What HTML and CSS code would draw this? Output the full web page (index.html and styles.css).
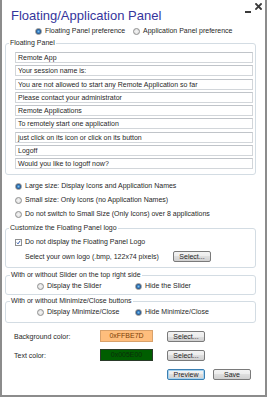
FILE: index.html
```html
<!DOCTYPE html>
<html lang="en">
<head>
    <meta charset="UTF-8">
    <title>Floating/Application Panel</title>
    <link rel="stylesheet" href="styles.css">
</head>
<body>
    <div class="window">
        <div class="header">
            <h1 class="title">Floating/Application Panel</h1>
            <div class="controls">
                <span class="minimize"></span>
                <svg class="close" width="7" height="7" viewBox="0 0 7 7">
                    <path d="M1 1 L6 6 M6 1 L1 6" stroke="#3a3a3a" stroke-width="1.8" stroke-linecap="square"/>
                </svg>
            </div>
        </div>

        <div class="pref-row">
            <label class="option"><span class="radio checked"></span>Floating Panel preference</label>
            <label class="option"><span class="radio"></span>Application Panel preference</label>
        </div>

        <fieldset class="group texts">
            <legend>Floating Panel</legend>
            <div class="field">Remote App</div>
            <div class="field">Your session name is:</div>
            <div class="field">You are not allowed to start any Remote Application so far</div>
            <div class="field">Please contact your administrator</div>
            <div class="field">Remote Applications</div>
            <div class="field">To remotely start one application</div>
            <div class="field">just click on its icon or click on its button</div>
            <div class="field">Logoff</div>
            <div class="field">Would you like to logoff now?</div>
        </fieldset>

        <div class="sizes">
            <label class="option"><span class="radio checked"></span>Large size: Display Icons and Application Names</label>
            <label class="option"><span class="radio"></span>Small size: Only Icons (no Application Names)</label>
            <label class="option"><span class="radio"></span>Do not switch to Small Size (Only Icons) over 8 applications</label>
        </div>

        <fieldset class="group logo">
            <legend>Customize the Floating Panel logo</legend>
            <label class="option">
                <span class="checkbox">
                    <svg width="7" height="7" viewBox="0 0 7 7"><path d="M1.2 3.6 L2.8 5.4 L5.8 1.2" fill="none" stroke="#2752a8" stroke-width="1.3"/></svg>
                </span>Do not display the Floating Panel Logo
            </label>
            <div class="logo-row">
                <span class="logo-text">Select your own logo (.bmp, 122x74 pixels)</span>
                <button class="btn">Select...</button>
            </div>
        </fieldset>

        <fieldset class="group pair slider">
            <legend>With or without Slider on the top right side</legend>
            <div class="pair-row">
                <label class="option"><span class="radio"></span>Display the Slider</label>
                <label class="option"><span class="radio checked"></span>Hide the Slider</label>
            </div>
        </fieldset>

        <fieldset class="group pair buttons-group">
            <legend>With or without Minimize/Close buttons</legend>
            <div class="pair-row">
                <label class="option"><span class="radio"></span>Display Minimize/Close</label>
                <label class="option"><span class="radio checked"></span>Hide Minimize/Close</label>
            </div>
        </fieldset>

        <div class="color-row bg-row">
            <span class="color-label">Background color:</span>
            <span class="swatch swatch-bg">0xFFBE7D</span>
            <button class="btn">Select...</button>
        </div>
        <div class="color-row text-row">
            <span class="color-label">Text color:</span>
            <span class="swatch swatch-text">0x005E00</span>
            <button class="btn">Select...</button>
        </div>

        <div class="actions">
            <button class="btn default">Preview</button>
            <button class="btn">Save</button>
        </div>
    </div>
</body>
</html>
```

FILE: styles.css
```css
* {
    margin: 0;
    padding: 0;
    box-sizing: border-box;
}

body {
    width: 270px;
    height: 399px;
    background: #fff;
    font-family: "Liberation Sans", Arial, sans-serif;
    font-size: 7px;
    color: #1f1f1f;
}

.window {
    width: 267px;
    height: 397px;
    border: 2px solid #8c8c8c;
    border-top: none;
    padding: 0 3px;
}

.header {
    display: flex;
    justify-content: space-between;
    height: 25px;
}

.title {
    font-family: "Liberation Sans", Arial, sans-serif;
    font-weight: normal;
    font-size: 13px;
    line-height: 15px;
    color: #35359c;
    padding: 8px 0 0 6px;
}

.controls {
    display: flex;
    align-items: flex-start;
    gap: 4px;
    padding-top: 3px;
}

.minimize {
    width: 6px;
    height: 2px;
    margin-top: 8px;
    background: #3a3a3a;
}

.option {
    display: flex;
    align-items: center;
    height: 12px;
    line-height: 12px;
    white-space: nowrap;
}

.radio {
    width: 7px;
    height: 7px;
    margin-right: 3px;
    border-radius: 50%;
    border: 1px solid #8e8f8f;
    background: radial-gradient(circle, #f4f4f4 0%, #dcdcdc 100%);
    flex-shrink: 0;
}

.radio.checked {
    background: radial-gradient(circle, #7fc0f0 0%, #3d86c6 35%, #1d4b84 70%, #dcdcdc 100%);
}

.checkbox {
    width: 7px;
    height: 7px;
    margin-right: 3px;
    border: 1px solid #8e8f8f;
    background: #fff;
    display: flex;
    align-items: center;
    justify-content: center;
    flex-shrink: 0;
}

.checkbox svg {
    display: block;
}

.pref-row {
    display: flex;
    padding-left: 30px;
}

.pref-row .option {
    width: 98px;
}

.group {
    margin-right: 6px;
    border: 1px solid #d3dce3;
    border-radius: 3px;
}

.group legend {
    line-height: 8px;
    padding: 0 1px;
    margin-left: -6px;
}

.texts {
    margin-top: 2px;
    padding: 5px 2px 5px 9px;
    display: flex;
    flex-direction: column;
    gap: 2.25px;
}

.field {
    height: 11px;
    line-height: 9px;
    padding-left: 2px;
    border: 1px solid #d2d6da;
    border-top-color: #c0c4c9;
    white-space: nowrap;
    overflow: hidden;
}

.sizes {
    margin-top: 4px;
    padding-left: 10px;
}

.sizes .option {
    height: 14px;
}

.logo {
    margin-top: 3px;
    padding: 4px 2px 5px 9px;
}

.logo-row {
    display: flex;
    align-items: center;
    height: 12px;
    margin-top: 2px;
    padding-left: 10px;
}

.logo-text {
    width: 148px;
}

.btn {
    width: 38px;
    height: 11px;
    font-family: "Liberation Sans", Arial, sans-serif;
    font-size: 7px;
    line-height: 9px;
    color: #1f1f1f;
    border: 1px solid #7a7a7a;
    border-radius: 2px;
    background: linear-gradient(#f3f3f3, #ececec 50%, #dedede 50%, #d0d0d0);
}

.btn.default {
    border-color: #3c7fb1;
    box-shadow: inset 0 0 0 1px #a6d4f2;
}

.pair {
    padding: 1px 0 2px 31px;
}

.pair legend {
    margin-left: -27px;
}

.pair-row {
    display: flex;
}

.pair-row .option {
    width: 98px;
}

.slider {
    margin-top: 3px;
}

.buttons-group {
    margin-top: 2px;
    padding-bottom: 4px;
}

.color-row {
    display: flex;
    align-items: center;
    height: 12px;
    padding-left: 9px;
}

.bg-row {
    margin-top: 7px;
}

.text-row {
    margin-top: 7px;
}

.color-label {
    width: 86px;
}

.swatch {
    width: 53px;
    height: 12px;
    line-height: 10px;
    text-align: center;
    margin-right: 14px;
    border: 1px solid rgba(0, 0, 0, 0.15);
}

.swatch-bg {
    background: #ffbe7d;
    color: #7a3e08;
}

.swatch-text {
    background: #005e00;
    color: #0b2e0b;
    border-color: #2a3a2a;
}

.actions {
    display: flex;
    gap: 8px;
    margin-top: 8px;
    padding-left: 162px;
}
```
